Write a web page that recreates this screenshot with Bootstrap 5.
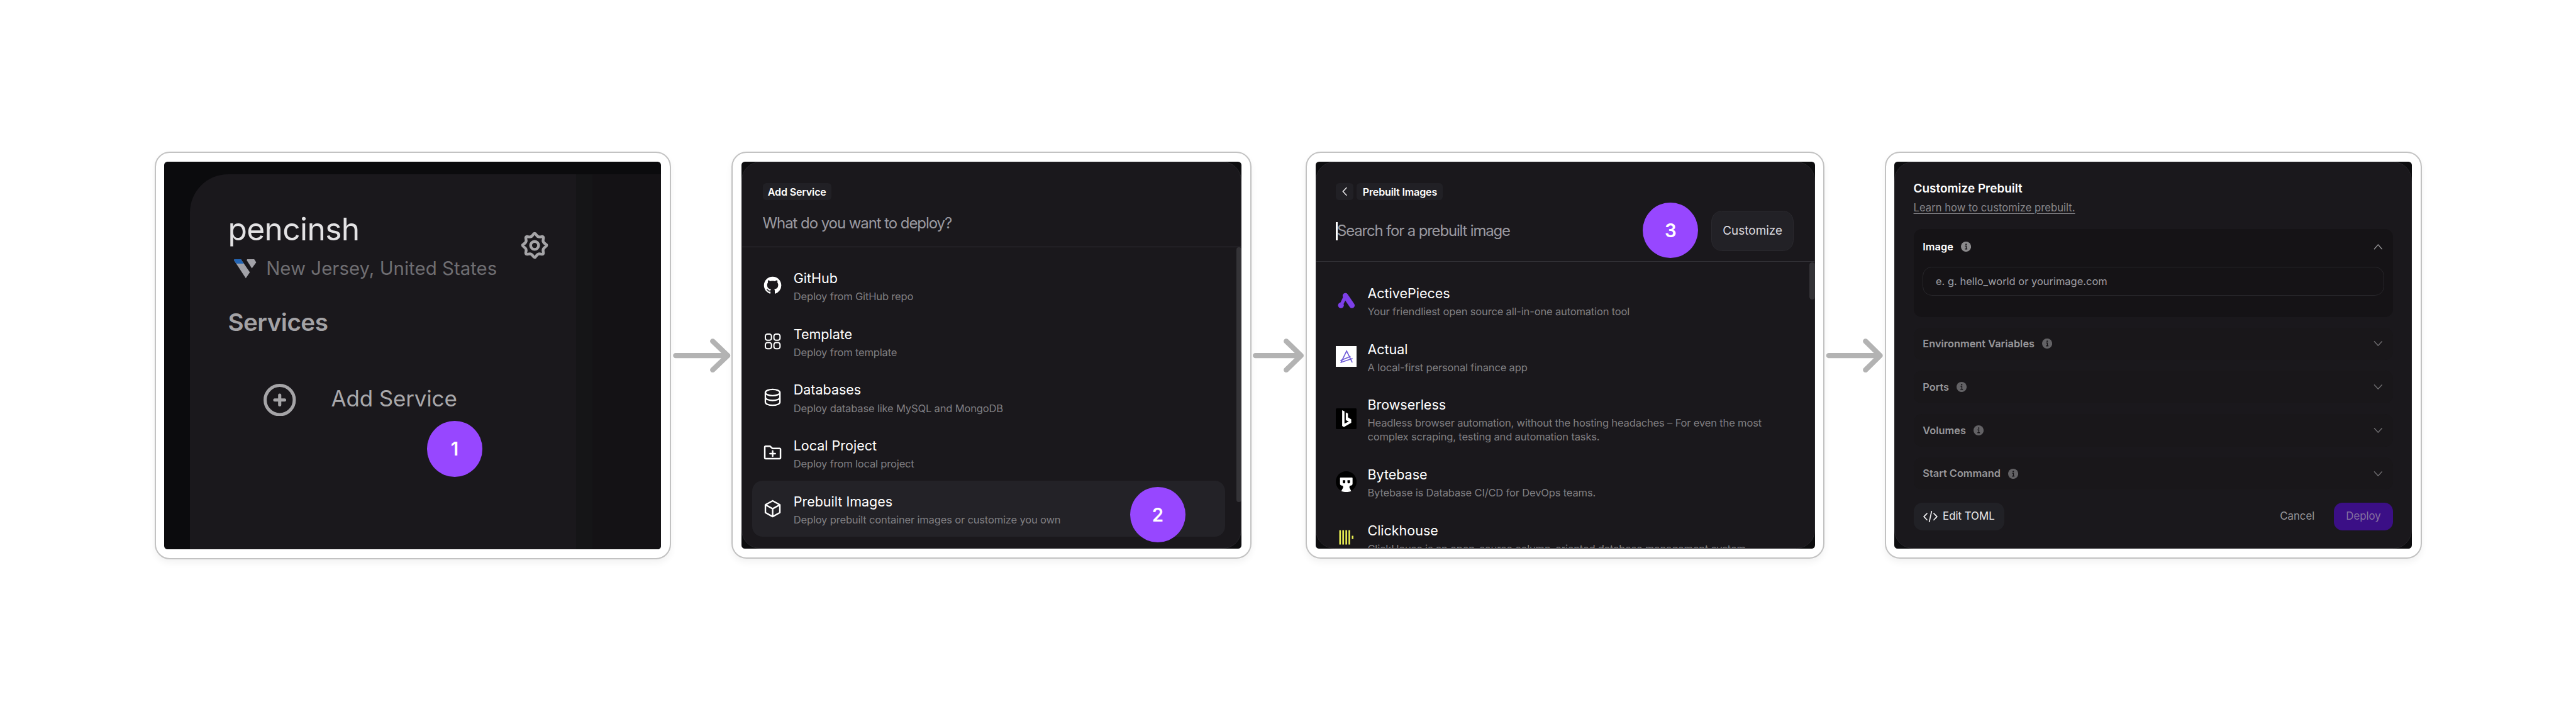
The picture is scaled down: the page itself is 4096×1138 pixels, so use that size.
<!DOCTYPE html>
<html lang="en">
<head>
<meta charset="utf-8">
<title>Deploy a prebuilt image</title>
<link href="https://cdn.jsdelivr.net/npm/bootstrap@5.3.0/dist/css/bootstrap.min.css" rel="stylesheet">
<style>
/* 1rem is ten design pixels */
html{font-size:9.1962px}
body{font-family:Inter,"Liberation Sans",sans-serif;font-size:1.8rem;background:#fff;overflow:hidden}
.flow{padding:26.26rem 0 0 26.7rem;height:1138px}
.shot{border:2px solid #c2c2c2;border-radius:2.6rem;padding:1.5rem;height:70.29rem;background:#fff;box-shadow:0 .6rem 1.2rem rgba(0,0,0,.05)}
.shot-a{width:89.3rem;height:70.44rem}.shot-b{width:89.92rem}.shot-c{width:89.77rem}.shot-d{width:92.88rem}
.screen{border-radius:.6rem;background:#0d0d0f;height:100%}
.link-arrow{padding-top:32.24rem}
.link-arrow svg{height:6rem;display:block}
.link-arrow path{fill:none;stroke:#b3b3b3;stroke-width:9;stroke-linecap:round;stroke-linejoin:round}
.step{position:absolute;width:9.6rem;height:9.6rem;border-radius:50%;background:#9747ff;color:#fff;font-weight:600;font-size:3.2rem}
.step-1{left:45.4rem;top:44.8rem}.step-2{left:67.2rem;top:56.2rem}.step-3{left:56.6rem;top:7.05rem}
svg{flex:none}

/* project sidebar */
.crop-a{background:#0b0b0d;padding:2.15rem 0 0 4.4rem}
.side{width:66.8rem;background:#1a181c;border-top-left-radius:6.6rem;padding:6.5rem 4.8rem 0 6.6rem}
.strip{width:2.8rem;background:#151517}
.side-rest{background:#141215}
.proj{font-size:5.4rem;line-height:6rem;letter-spacing:-.012em;color:#e3e2e4}
.region{font-size:3.2rem;line-height:4rem;color:#6f6e72;margin-top:1.69rem;letter-spacing:.001em}
.region svg{width:3.9rem;height:3.4rem;margin:.3rem 1.7rem 0 1rem}
.gear{width:4.8rem;height:4.8rem}
.services{font-size:4.2rem;line-height:5rem;font-weight:600;letter-spacing:-.014em;color:#a3a2a5;margin-top:4.81rem}
.add-row{margin-top:8.19rem;padding-left:6.2rem;font-size:3.8rem;line-height:5.1rem;letter-spacing:-.004em;color:#a9a8ab}
.add-row svg{width:5.6rem;height:5.6rem;margin-right:6.05rem}

/* dialogs */
.dlg{height:100%;background:#1a181c;border:1px solid #28272b;border-radius:3.2rem}
.dlg-head{border-bottom:1px solid #333237}
.chip{background:#212025;border-radius:.6rem;height:3rem;color:#fff;font-weight:600;font-size:1.75rem;letter-spacing:-.01em}
.head-b{padding:3.55rem 3.5rem 1.9rem 3.55rem}
.head-c{padding:3.55rem 3.5rem 1.75rem 3.45rem}
.ask{font-size:2.6rem;line-height:4rem;letter-spacing:-.043em;color:#9a9aa1;margin-top:2.05rem}
.seek{letter-spacing:-.0475em;margin:.1rem 0 0 -.1rem}
.caret{width:.28rem;height:3.2rem;background:#fff}
.btn-soft{background:#222126;border:1px solid #2a292e;border-radius:1.8rem;color:#dddce0;font-size:2.06rem}
.cust{width:14.3rem;height:7rem;margin-top:1.8rem}
.items{padding:1.84rem 2.7rem 0 1.75rem}
.items-c{padding:1.84rem 3rem 0 1.75rem}
.item{border-radius:1.8rem;padding:0 1.7rem}
.item svg{width:3.6rem;height:3.6rem;margin-right:1.85rem;align-self:center}
.item-on{background:#232227}
.item-tx{padding:2.12rem 0 1.72rem}
.ttl{font-size:2.34rem;line-height:3rem;color:#fff}
.sub{font-size:1.8rem;line-height:2.4rem;letter-spacing:-.011em;color:#807f82;margin-top:.4rem}
.bar{position:absolute;right:0;width:.9rem;border-radius:.45rem;background:#343337}
.bar-b{top:14.75rem;height:44.1rem}.bar-c{top:17.35rem;height:6.4rem}

/* customise form */
.form-pad{padding:3.28rem 3.1rem 0 3.18rem}
.f-title{font-size:2.06rem;line-height:2.6rem;font-weight:600;color:#fff}
.f-learn{font-size:1.81rem;line-height:2.6rem;color:#88878b;margin-top:.7rem;text-decoration:underline;text-underline-offset:.35rem;text-decoration-thickness:.15rem}
.panel-open{background:#151316;border-radius:1.4rem;margin-top:2.33rem;height:15.23rem;padding:0 1.6rem}
.panel-open .sec-head{height:6.06rem}
.field{margin-top:.47rem;height:5rem;border:1px solid #28272b;border-radius:1.6rem;padding:0 2.15rem;font-size:1.79rem;color:#a0a0a6}
.secs{margin-top:1.8rem;gap:1.88rem}
.sec{background:#19171a;border-radius:1.4rem;height:5.6rem;padding:0 1.6rem;color:#98979a}
.sec-head{font-weight:600;font-size:1.78rem}
.info{width:1.75rem;height:1.75rem;margin-left:1.35rem}
.chev{width:1.6rem;height:1.1rem;margin-right:.2rem;fill:none;stroke:#6f6e71;stroke-width:1.5;stroke-linecap:round;stroke-linejoin:round}
.foot{margin-top:2.2rem;font-size:1.83rem}
.foot>div{height:4.85rem;border-radius:1.5rem}
.toml{width:15.7rem;background:#212126;color:#ebeaec}
.toml svg{width:2.5rem;height:2rem;margin-right:.9rem}
.deploy{width:10.3rem;background:#3b0f86;color:#8672a0}
.cancel{color:#98979a;margin-right:3.3rem}
</style>
</head>
<body>
<svg class="d-none" xmlns="http://www.w3.org/2000/svg">
  <symbol id="info" viewBox="0 0 18 18"><circle cx="9" cy="9" r="9" fill="currentColor"/><circle cx="9.2" cy="4.9" r="1.3" fill="#151316"/><path d="M7.2 8h2.3v5M7 13.2h4.4" fill="none" stroke="#151316" stroke-width="1.5"/></symbol>
</svg>
<main class="flow d-flex align-items-start">

  <section class="shot shot-a flex-shrink-0">
    <div class="screen crop-a d-flex position-relative overflow-hidden">
      <div class="side flex-shrink-0">
        <div class="d-flex justify-content-between align-items-center">
          <div>
            <div class="proj">pencinsh</div>
            <div class="region d-flex align-items-center">
              <svg viewBox="0 0 39 34"><path d="M1 0h11l15.5 22.5-7 10.500L0 1.500z" fill="#a2a2a8"/><path d="M1 0h11l5 7.500H4.200L0 1.500z" fill="#2264b4"/><path d="M23 0h12l3.500 5.500-7.500 10.300L22 1.500z" fill="#a2a2a8"/></svg>
              <span>New Jersey, United States</span>
            </div>
          </div>
          <svg class="gear" viewBox="-24 -24 48 48" fill="none" stroke="#a5a4a7" stroke-width="4.800"><path d="M18.350 -2.800Q23.200 0 18.350 2.800Q13.490 5.590 14.950 11Q16.400 16.400 11 14.950Q5.590 13.490 2.800 18.350Q0 23.200 -2.800 18.350Q-5.590 13.490 -11 14.950Q-16.400 16.400 -14.950 11Q-13.490 5.590 -18.350 2.800Q-23.200 0 -18.350 -2.800Q-13.490 -5.590 -14.950 -11Q-16.400 -16.400 -11 -14.950Q-5.590 -13.490 -2.800 -18.350Q0 -23.200 2.800 -18.350Q5.590 -13.490 11 -14.950Q16.400 -16.400 14.950 -11Q13.490 -5.590 18.350 -2.800Z"/><circle r="6.900"/></svg>
        </div>
        <div class="services">Services</div>
        <div class="add-row d-flex">
          <svg viewBox="0 0 56 56" fill="none" stroke="#a5a4a7" stroke-width="5.500" stroke-linecap="round"><circle cx="28" cy="28" r="25.200"/><path d="M28 19.500v17M19.500 28h17"/></svg>
          <span>Add Service</span>
        </div>
      </div>
      <div class="strip flex-shrink-0"></div>
      <div class="side-rest flex-grow-1"></div>
      <div class="step step-1 d-flex align-items-center justify-content-center">1</div>
    </div>
  </section>

  <div class="link-arrow flex-shrink-0" style="width:10.480rem"><svg viewBox="0 0 104.800 60" width="100%"><path d="M8 29.500H98M72 4.700L98 29.500L72 54.300"/></svg></div>

  <section class="shot shot-b flex-shrink-0">
    <div class="screen position-relative overflow-hidden">
      <div class="dlg">
        <div class="dlg-head head-b">
          <div class="d-flex"><div class="chip d-flex align-items-center px-1" style="width:11.900rem"><span class="mx-auto">Add Service</span></div></div>
          <div class="ask">What do you want to deploy?</div>
        </div>
        <div class="items">
          <div class="item d-flex">
            <svg viewBox="-3 -3 36 36"><path transform="scale(1.875)" fill="#fff" d="M8 0C3.580 0 0 3.580 0 8c0 3.540 2.290 6.530 5.470 7.590.4.070.55-.17.55-.38 0-.19-.01-.82-.01-1.490-2.010.37-2.530-.49-2.690-.94-.09-.23-.48-.94-.82-1.130-.28-.15-.68-.52-.01-.53.63-.01 1.080.58 1.230.82.72 1.210 1.870.87 2.330.66.07-.52.28-.87.51-1.070-1.780-.2-3.640-.89-3.640-3.950 0-.87.31-1.590.82-2.150-.08-.2-.36-1.020.08-2.120 0 0 .67-.21 2.200.82.64-.18 1.320-.27 2-.27s1.360.09 2 .27c1.530-1.040 2.200-.82 2.200-.82.44 1.100.16 1.920.08 2.120.51.56.82 1.270.82 2.150 0 3.070-1.870 3.750-3.650 3.950.29.25.54.73.54 1.480 0 1.070-.01 1.930-.01 2.200 0 .21.15.46.55.38A8.010 8.010 0 0 0 16 8c0-4.420-3.580-8-8-8z"/></svg>
            <div class="item-tx"><div class="ttl">GitHub</div><div class="sub">Deploy from GitHub repo</div></div>
          </div>
          <div class="item d-flex">
            <svg viewBox="0 0 36 36" fill="none" stroke="#fff" stroke-width="2.200"><rect x="5.400" y="5.400" width="10.600" height="10.600" rx="3.600"/><rect x="20.200" y="5.400" width="10.600" height="10.600" rx="3.600"/><rect x="5.400" y="20.200" width="10.600" height="10.600" rx="3.600"/><rect x="20.200" y="20.200" width="10.600" height="10.600" rx="3.600"/></svg>
            <div class="item-tx"><div class="ttl">Template</div><div class="sub">Deploy from template</div></div>
          </div>
          <div class="item d-flex">
            <svg viewBox="0 0 36 36" fill="none" stroke="#fff" stroke-width="2.500"><ellipse cx="18" cy="9.700" rx="12.600" ry="5.400"/><path d="M5.400 9.700v16.600c0 3 5.600 5.400 12.600 5.400s12.600-2.400 12.600-5.400V9.700M5.400 18c0 3 5.600 5.400 12.600 5.400s12.600-2.400 12.600-5.400"/></svg>
            <div class="item-tx"><div class="ttl">Databases</div><div class="sub">Deploy database like MySQL and MongoDB</div></div>
          </div>
          <div class="item d-flex">
            <svg viewBox="0 0 36 36" fill="none" stroke="#fff" stroke-width="2.700" stroke-linejoin="round" stroke-linecap="round"><path d="M4.400 8.300a1.500 1.500 0 0 1 1.500-1.500h7.600l4 3.700h12.600a1.500 1.500 0 0 1 1.500 1.500v14.900a1.500 1.500 0 0 1-1.500 1.500H5.900a1.500 1.500 0 0 1-1.500-1.500zM18 15v9M13.500 19.500h9"/></svg>
            <div class="item-tx"><div class="ttl">Local Project</div><div class="sub">Deploy from local project</div></div>
          </div>
          <div class="item item-on d-flex">
            <svg viewBox="0 0 36 36" fill="none" stroke="#fff" stroke-width="2.600" stroke-linejoin="round"><path d="M18 4.300l12.500 6.900v13.600L18 31.700 5.500 24.800V11.200zM5.500 11.200L18 18.100l12.500-6.900M18 18.100v13.600"/></svg>
            <div class="item-tx"><div class="ttl">Prebuilt Images</div><div class="sub">Deploy prebuilt container images or customize you own</div></div>
          </div>
        </div>
      </div>
      <div class="bar bar-b"></div>
      <div class="step step-2 d-flex align-items-center justify-content-center">2</div>
    </div>
  </section>

  <div class="link-arrow flex-shrink-0" style="width:9.330rem"><svg viewBox="0 0 93.300 60" width="100%"><path d="M6.700 29.500H85.700M60 4.700L85.700 29.500L60 54.300"/></svg></div>

  <section class="shot shot-c flex-shrink-0">
    <div class="screen position-relative overflow-hidden">
      <div class="dlg overflow-hidden">
        <div class="dlg-head head-c">
          <div class="d-flex">
            <div class="chip d-flex align-items-center justify-content-center" style="width:3rem"><svg viewBox="0 0 9 16" style="width:.9rem;height:1.600rem" fill="none" stroke="#e3e2e4" stroke-width="1.700"><path d="M8 1L1.500 8 8 15"/></svg></div>
            <div class="chip d-flex align-items-center" style="width:14.900rem;margin-left:.6rem"><span class="mx-auto">Prebuilt Images</span></div>
          </div>
          <div class="d-flex justify-content-between align-items-start">
            <div class="d-flex align-items-center" style="height:7rem;margin-top:1.800rem"><div class="caret"></div><div class="ask seek">Search for a prebuilt image</div></div>
            <div class="btn-soft cust d-flex align-items-center justify-content-center">Customize</div>
          </div>
        </div>
        <div class="items items-c">
          <div class="item d-flex">
            <svg viewBox="0 0 36 36" fill="none" stroke="#7d3fe8" stroke-linecap="round"><path d="M16.500 9.800L28 26.600" stroke-width="9.400"/><path d="M9 26.500L15.500 13" stroke-width="6"/><circle cx="8.900" cy="26.500" r="5" fill="#7d3fe8" stroke="none"/></svg>
            <div class="item-tx"><div class="ttl">ActivePieces</div><div class="sub">Your friendliest open source all-in-one automation tool</div></div>
          </div>
          <div class="item d-flex">
            <svg viewBox="0 0 36 36" fill="none" stroke="#6f5bd8" stroke-width="1.800"><path d="M0 0h36v36H0z" fill="#fff" stroke="none"/><path d="M8.700 29L18.700 8.500 28.500 28.500M8 25L25.500 18M8 28.500L29 21.500"/></svg>
            <div class="item-tx"><div class="ttl">Actual</div><div class="sub">A local-first personal finance app</div></div>
          </div>
          <div class="item d-flex">
            <svg viewBox="0 0 36 36"><rect width="36" height="36" rx="2" fill="#000"/><path d="M11 3.300L15 5.300V26.500L22.500 22.800 17.300 20.500V7L21 9V15.500L26.700 19V25L14 32.300 11 30.500z" fill="#fff"/></svg>
            <div class="item-tx"><div class="ttl">Browserless</div><div class="sub">Headless browser automation, without the hosting headaches – For even the most<br>complex scraping, testing and automation tasks.</div></div>
          </div>
          <div class="item d-flex">
            <svg viewBox="0 0 36 36"><circle cx="18" cy="18" r="18" fill="#000"/><path fill="#fff" fill-rule="evenodd" d="M7.300 12q0-1 1-1h19.700q1 0 1 1v9.500q0 3.500-5 3.500l-.5 3 3.200 6.200q-3.500 1.800-8.700 1.800t-8.500-1.800l3.300-6.200-.5-3q-5 0-5-3.500zM12 15.500v3.500q0 2 2.200 2t2.200-2v-3.500zM20.200 15.500v3.500q0 2 2.200 2t2.200-2v-3.500z"/></svg>
            <div class="item-tx"><div class="ttl">Bytebase</div><div class="sub">Bytebase is Database CI/CD for DevOps teams.</div></div>
          </div>
          <div class="item d-flex">
            <svg viewBox="0 0 36 36" fill="#e9ee52"><path d="M6 5.300h2.800v24.700H6zM11.300 5.300h2.800v24.700h-2.800zM16.700 5.300h2.800v24.700h-2.800zM22 5.300h2.800v24.700H22zM27.700 14.700h2.800v5.600h-2.800z"/></svg>
            <div class="item-tx"><div class="ttl">Clickhouse</div><div class="sub">ClickHouse is an open-source column-oriented database management system</div></div>
          </div>
        </div>
      </div>
      <div class="bar bar-c"></div>
      <div class="step step-3 d-flex align-items-center justify-content-center">3</div>
    </div>
  </section>

  <div class="link-arrow flex-shrink-0" style="width:10.350rem"><svg viewBox="0 0 103.500 60" width="100%"><path d="M7.500 29.500H96.300M71 4.700L96.300 29.500L71 54.300"/></svg></div>

  <section class="shot shot-d flex-shrink-0">
    <div class="screen position-relative overflow-hidden">
      <div class="dlg form-pad">
        <div class="f-title">Customize Prebuilt</div>
        <div class="f-learn">Learn how to customize prebuilt.</div>
        <div class="panel-open">
          <div class="sec-head d-flex align-items-center text-white">Image<svg class="info" style="color:#8b8a8c"><use href="#info"/></svg><svg class="chev ms-auto" viewBox="0 0 16 11" style="stroke:#98979a"><path d="M1.500 9.500L8 2l6.500 7.500"/></svg></div>
          <div class="field d-flex align-items-center">e. g. hello_world or yourimage.com</div>
        </div>
        <div class="secs d-flex flex-column">
          <div class="sec sec-head d-flex align-items-center">Environment Variables<svg class="info" style="color:#636265"><use href="#info"/></svg><svg class="chev ms-auto" viewBox="0 0 16 11"><path d="M1.500 2L8 9l6.500-7"/></svg></div>
          <div class="sec sec-head d-flex align-items-center">Ports<svg class="info" style="color:#636265"><use href="#info"/></svg><svg class="chev ms-auto" viewBox="0 0 16 11"><path d="M1.500 2L8 9l6.500-7"/></svg></div>
          <div class="sec sec-head d-flex align-items-center">Volumes<svg class="info" style="color:#636265"><use href="#info"/></svg><svg class="chev ms-auto" viewBox="0 0 16 11"><path d="M1.500 2L8 9l6.500-7"/></svg></div>
          <div class="sec sec-head d-flex align-items-center">Start Command<svg class="info" style="color:#636265"><use href="#info"/></svg><svg class="chev ms-auto" viewBox="0 0 16 11"><path d="M1.500 2L8 9l6.500-7"/></svg></div>
        </div>
        <div class="foot d-flex align-items-center">
          <div class="toml d-flex align-items-center justify-content-center"><svg viewBox="0 0 25 20" fill="none" stroke="#ebeaec" stroke-width="1.900" stroke-linecap="round" stroke-linejoin="round"><path d="M6.500 4.500L1.200 10l5.300 5.500M18.500 4.500l5.300 5.500-5.300 5.500M14.500 1l-4 18"/></svg>Edit TOML</div>
          <div class="cancel d-flex align-items-center ms-auto">Cancel</div>
          <div class="deploy d-flex align-items-center justify-content-center">Deploy</div>
        </div>
      </div>
    </div>
  </section>
</main>
<script src="https://cdn.jsdelivr.net/npm/bootstrap@5.3.0/dist/js/bootstrap.bundle.min.js"></script>
</body>
</html>
